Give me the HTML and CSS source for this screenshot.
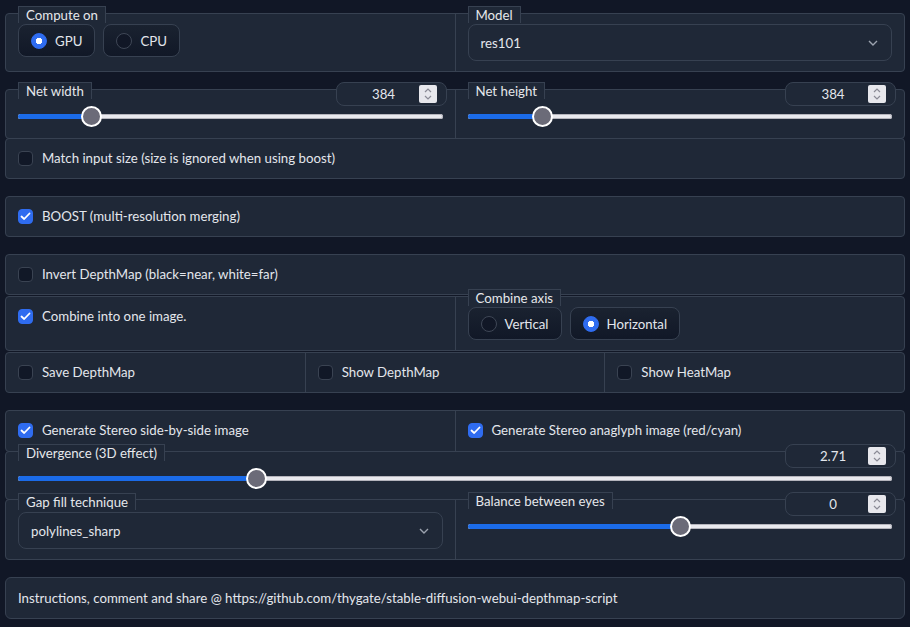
FILE: index.html
```html
<!DOCTYPE html>
<html lang="en">
<head>
<meta charset="utf-8">
<title>Depthmap script</title>
<link rel="stylesheet" href="styles.css">
</head>
<body>
<div class="app">

  <section class="box">
    <div class="col">
      <span class="blabel top">Compute on</span>
      <div class="radios">
        <label class="radio on"><span class="dot"></span>GPU</label>
        <label class="radio"><span class="dot"></span>CPU</label>
      </div>
    </div>
    <div class="col">
      <span class="blabel top">Model</span>
      <div class="select"><span>res101</span><svg class="chev" width="10" height="6" viewBox="0 0 10 6"><polyline points="1,1 5,5 9,1"/></svg></div>
    </div>
  </section>

  <div class="group tight">
    <section class="box">
      <div class="col pb11">
        <div class="head">
          <span class="blabel">Net width</span>
          <div class="num"><span class="v">384</span><span class="spin"><svg width="10" height="14" viewBox="0 0 10 14"><polyline points="2,5 5,2 8,5"/><polyline points="2,9 5,12 8,9"/></svg></span></div>
        </div>
        <div class="slider"><span class="track"></span><span class="fill" style="width:17.4%"></span><span class="thumb" style="left:17.4%"></span></div>
      </div>
      <div class="col pb11">
        <div class="head">
          <span class="blabel">Net height</span>
          <div class="num"><span class="v">384</span><span class="spin"><svg width="10" height="14" viewBox="0 0 10 14"><polyline points="2,5 5,2 8,5"/><polyline points="2,9 5,12 8,9"/></svg></span></div>
        </div>
        <div class="slider"><span class="track"></span><span class="fill" style="width:17.6%"></span><span class="thumb" style="left:17.6%"></span></div>
      </div>
    </section>
    <section class="box">
      <div class="col cb"><label class="check"><span class="cbx"></span>Match input size (size is ignored when using boost)</label></div>
    </section>
  </div>

  <section class="box">
    <div class="col cb"><label class="check"><span class="cbx on"><svg width="11" height="9" viewBox="0 0 11 9"><polyline points="1.5,4.5 4.2,7 9.5,1.5"/></svg></span>BOOST (multi-resolution merging)</label></div>
  </section>

  <div class="group split">
    <section class="box">
      <div class="col cb"><label class="check"><span class="cbx"></span>Invert DepthMap (black=near, white=far)</label></div>
    </section>
    <section class="box">
      <div class="col cb"><label class="check"><span class="cbx on"><svg width="11" height="9" viewBox="0 0 11 9"><polyline points="1.5,4.5 4.2,7 9.5,1.5"/></svg></span>Combine into one image.</label></div>
      <div class="col">
        <span class="blabel top">Combine axis</span>
        <div class="radios">
          <label class="radio"><span class="dot"></span>Vertical</label>
          <label class="radio on"><span class="dot"></span>Horizontal</label>
        </div>
      </div>
    </section>
    <section class="box">
      <div class="col cb"><label class="check"><span class="cbx"></span>Save DepthMap</label></div>
      <div class="col cb"><label class="check"><span class="cbx"></span>Show DepthMap</label></div>
      <div class="col cb"><label class="check"><span class="cbx"></span>Show HeatMap</label></div>
    </section>
  </div>

  <div class="group tight">
    <section class="box">
      <div class="col cb tall"><label class="check"><span class="cbx on"><svg width="11" height="9" viewBox="0 0 11 9"><polyline points="1.5,4.5 4.2,7 9.5,1.5"/></svg></span>Generate Stereo side-by-side image</label></div>
      <div class="col cb tall"><label class="check"><span class="cbx on"><svg width="11" height="9" viewBox="0 0 11 9"><polyline points="1.5,4.5 4.2,7 9.5,1.5"/></svg></span>Generate Stereo anaglyph image (red/cyan)</label></div>
    </section>
    <section class="box">
      <div class="col">
        <div class="head">
          <span class="blabel">Divergence (3D effect)</span>
          <div class="num"><span class="v">2.71</span><span class="spin"><svg width="10" height="14" viewBox="0 0 10 14"><polyline points="2,5 5,2 8,5"/><polyline points="2,9 5,12 8,9"/></svg></span></div>
        </div>
        <div class="slider"><span class="track"></span><span class="fill" style="width:27.3%"></span><span class="thumb" style="left:27.3%"></span></div>
      </div>
    </section>
    <section class="box">
      <div class="col">
        <span class="blabel top low">Gap fill technique</span>
        <div class="select gapped"><span>polylines_sharp</span><svg class="chev" width="10" height="6" viewBox="0 0 10 6"><polyline points="1,1 5,5 9,1"/></svg></div>
      </div>
      <div class="col">
        <div class="head">
          <span class="blabel">Balance between eyes</span>
          <div class="num"><span class="v">0</span><span class="spin"><svg width="10" height="14" viewBox="0 0 10 14"><polyline points="2,5 5,2 8,5"/><polyline points="2,9 5,12 8,9"/></svg></span></div>
        </div>
        <div class="slider"><span class="track"></span><span class="fill" style="width:50.1%"></span><span class="thumb" style="left:50.1%"></span></div>
      </div>
    </section>
  </div>

  <section class="box foot">
    Instructions, comment and share @ https://github.com/thygate/stable-diffusion-webui-depthmap-script
  </section>

</div>
</body>
</html>
```

FILE: styles.css
```css
* { box-sizing: border-box; }

html, body {
  margin: 0;
  background: #111726;
}

body {
  font-family: Lato, "Liberation Sans", sans-serif;
  font-size: 13.25px;
  color: #e3e6ec;
}

.app {
  width: 910px;
  padding: 13px 5px 0;
  display: flex;
  flex-direction: column;
  gap: 17px;
}

.group {
  display: flex;
  flex-direction: column;
}
.group.tight > .box + .box { margin-top: -1px; }
.group.split { gap: 1px; }

.box {
  display: flex;
  background: #1f2837;
  border: 1px solid #374151;
  border-radius: 4px;
}

.col {
  flex: 1 1 0;
  min-width: 0;
  padding: 0 12px 10px;
  display: flex;
  flex-direction: column;
}
.col.pb11 { padding-bottom: 11px; }
.col + .col { border-left: 1px solid #374151; }
.col.cb { padding: 11px 12px; }
.col.cb.tall { padding-bottom: 12px; }

.blabel {
  align-self: flex-start;
  height: 17px;
  line-height: 16px;
  padding: 0 7px;
  border: 1px solid #374151;
  border-bottom: none;
  background: #1f2837;
  color: #e5e7eb;
  white-space: nowrap;
}
.blabel.top { margin-top: -8px; }
.blabel.top.low { margin-top: -7px; }

.head {
  display: flex;
  justify-content: space-between;
  align-items: flex-start;
  margin-top: -8px;
}

/* radios */
.radios {
  display: flex;
  gap: 8px;
  margin-top: 1px;
}
.radio {
  height: 33px;
  display: flex;
  align-items: center;
  gap: 8px;
  padding: 0 12px;
  border: 1px solid #374151;
  border-radius: 8px;
  background: linear-gradient(#1a2230, #111827);
}
.dot {
  width: 16px;
  height: 16px;
  border-radius: 50%;
  border: 1px solid #3f4756;
  background: #111726;
}
.radio.on .dot {
  border-color: #2f6cf0;
  background: radial-gradient(circle, #fff 0 3px, #2f6cf0 3.5px);
}

/* select */
.select {
  margin-top: 1px;
  height: 37px;
  display: flex;
  align-items: center;
  justify-content: space-between;
  padding: 0 13px 0 12px;
  border: 1px solid #374151;
  border-radius: 8px;
  background: #1f2837;
}
.select.gapped { margin-top: 2px; }
.chev polyline {
  fill: none;
  stroke: #9ca3af;
  stroke-width: 1.4;
}

/* number */
.num {
  width: 111px;
  height: 24px;
  margin-right: -4px;
  display: flex;
  align-items: center;
  padding: 0 9px 0 12px;
  border: 1px solid #374151;
  border-radius: 8px;
  background: #1f2837;
}
.num .v {
  flex: 1;
  text-align: center;
}
.spin {
  width: 18px;
  height: 18px;
  display: flex;
  align-items: center;
  justify-content: center;
  background: #e7e7ec;
  border-radius: 2px;
}
.spin polyline {
  fill: none;
  stroke: #8b8b96;
  stroke-width: 1.2;
}

/* slider */
.slider {
  position: relative;
  height: 21px;
}
.track {
  position: absolute;
  left: 0;
  right: 0;
  top: 8px;
  height: 5px;
  border-radius: 3px;
  background: #e9e9ee;
  box-shadow: inset 0 0 0 1px #b4b4bc;
}
.fill {
  position: absolute;
  left: 0;
  top: 8px;
  height: 5px;
  border-radius: 3px;
  background: #1b6be8;
}
.thumb {
  position: absolute;
  top: 0;
  width: 21px;
  height: 21px;
  margin-left: -10.5px;
  border-radius: 50%;
  background: #6b6b78;
  border: 2px solid #fff;
}

/* checkbox */
.check {
  display: flex;
  align-items: center;
  gap: 9px;
  line-height: 17px;
  white-space: nowrap;
}
.cbx {
  flex: none;
  width: 15px;
  height: 15px;
  display: flex;
  align-items: center;
  justify-content: center;
  border: 1px solid #3a4352;
  border-radius: 4px;
  background: #111827;
}
.cbx.on {
  background: #2f6cf0;
  border-color: #2f6cf0;
}
.cbx polyline {
  fill: none;
  stroke: #fff;
  stroke-width: 1.8;
  stroke-linecap: round;
  stroke-linejoin: round;
}

.foot {
  padding: 11px 12px;
  line-height: 18px;
  border-radius: 6px;
}
```
